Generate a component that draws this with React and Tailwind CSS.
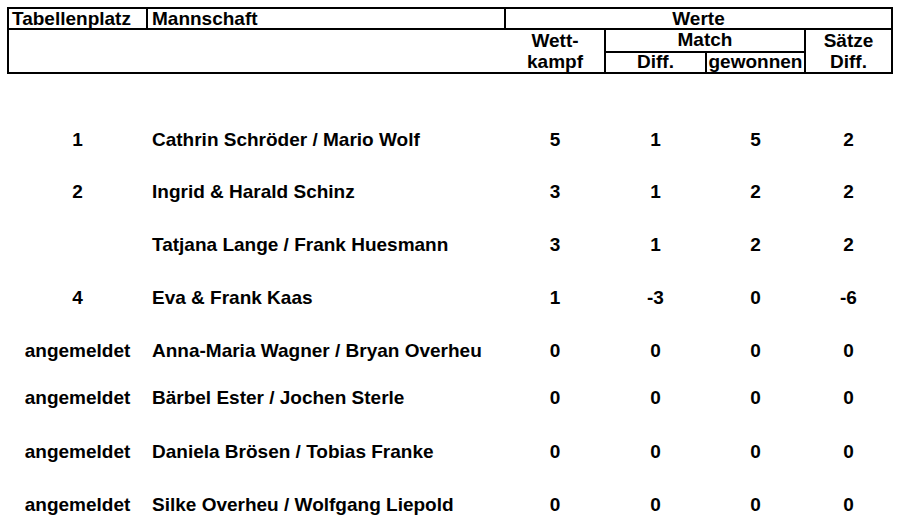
import React from "react";

const rows = [
  { place: "1", name: "Cathrin Schröder / Mario Wolf", v: ["5", "1", "5", "2"], h: "h-[52px]" },
  { place: "2", name: "Ingrid & Harald Schinz", v: ["3", "1", "2", "2"], h: "h-[53px]" },
  { place: "", name: "Tatjana Lange / Frank Huesmann", v: ["3", "1", "2", "2"], h: "h-[53px]" },
  { place: "4", name: "Eva & Frank Kaas", v: ["1", "-3", "0", "-6"], h: "h-[53px]" },
  { place: "angemeldet", name: "Anna-Maria Wagner / Bryan Overheu", v: ["0", "0", "0", "0"], h: "h-[47px]" },
  { place: "angemeldet", name: "Bärbel Ester / Jochen Sterle", v: ["0", "0", "0", "0"], h: "h-[54px]" },
  { place: "angemeldet", name: "Daniela Brösen / Tobias Franke", v: ["0", "0", "0", "0"], h: "h-[53px]" },
  { place: "angemeldet", name: "Silke Overheu / Wolfgang Liepold", v: ["0", "0", "0", "0"], h: "h-[20px]" },
];

const cols = "grid-cols-[137px_356px_98px_99px_97px_85px]";

export default function App() {
  return (
    <div
      className="w-[900px] h-[521px] overflow-hidden bg-white text-black font-bold text-[19px]"
      style={{ fontFamily: '"Liberation Sans", Arial, sans-serif' }}
    >
      {/* Header */}
      <div className="pt-[7px] pl-[7px]">
        <div
          className={`grid ${cols} grid-rows-[19px_21px_19px] gap-[2px] p-[2px] bg-black w-[886px]`}
        >
          <div className="bg-white pl-[3px] leading-[19px] whitespace-nowrap">Tabellenplatz</div>
          <div className="bg-white pl-[4px] leading-[19px] whitespace-nowrap">Mannschaft</div>
          <div className="bg-white col-span-4 text-center leading-[19px]">Werte</div>

          <div className="bg-white col-span-2 row-span-2 -mr-[2px]"></div>
          <div className="bg-white row-span-2 flex flex-col items-center leading-[21.5px] -mt-[0.5px]">
            <span>Wett-</span>
            <span>kampf</span>
          </div>
          <div className="bg-white col-span-2 text-center leading-[20px]">Match</div>
          <div className="bg-white row-span-2 flex flex-col items-center leading-[21.5px] -mt-[0.5px]">
            <span>Sätze</span>
            <span>Diff.</span>
          </div>
          <div className="bg-white text-center leading-[18px]">Diff.</div>
          <div className="bg-white text-center leading-[18px] whitespace-nowrap">gewonnen</div>
        </div>
      </div>

      {/* Body */}
      <div className="pt-[56px] pl-[9px]">
        {rows.map((r, i) => (
          <div key={i} className={`grid ${cols} gap-x-[2px] items-start leading-[20px] ${r.h}`}>
            <div className="text-center whitespace-nowrap">{r.place}</div>
            <div className="pl-[4px] whitespace-nowrap">{r.name}</div>
            {r.v.map((x, j) => (
              <div key={j} className="text-center">{x}</div>
            ))}
          </div>
        ))}
      </div>
    </div>
  );
}
